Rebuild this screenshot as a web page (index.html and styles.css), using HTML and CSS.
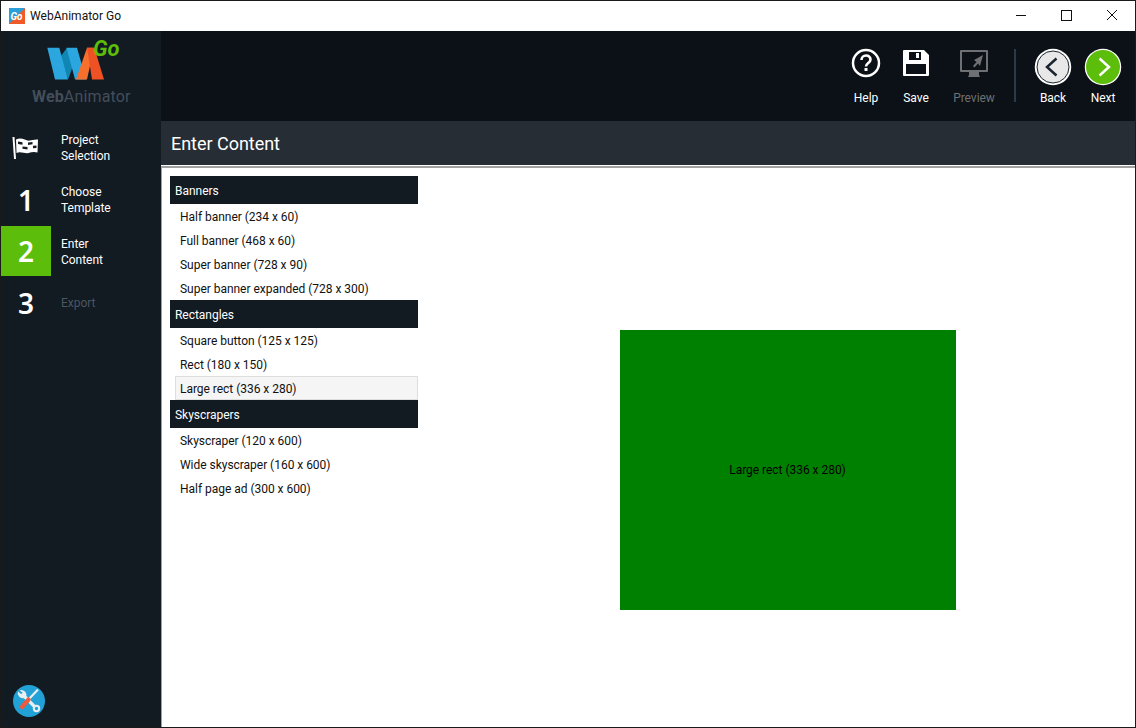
FILE: index.html
```html
<!DOCTYPE html>
<html lang="en">

<head>
    <meta charset="UTF-8">
    <title>WebAnimator Go</title>
    <link rel="stylesheet" href="styles.css">
</head>

<body>
    <div class="window">
        <div class="titlebar">
            <svg class="app-icon" width="16" height="16" viewBox="0 0 16 16">
                <rect width="16" height="16" fill="#2a9fd8"/>
                <polygon points="16,0 16,16 0,16" fill="#f05a28"/>
                <text x="1.5" y="12" class="app-icon-text">Go</text>
            </svg>
            <span class="title">WebAnimator Go</span>
            <div class="win-btns">
                <svg width="46" height="30" viewBox="0 0 46 30"><path d="M19 14.500h10" stroke="#111" fill="none"/></svg>
                <svg width="46" height="30" viewBox="0 0 46 30"><rect x="18.500" y="9.500" width="10" height="10" stroke="#111" fill="none"/></svg>
                <svg width="46" height="30" viewBox="0 0 46 30"><path d="M18 9l10 10M28 9l-10 10" stroke="#111" fill="none"/></svg>
            </div>
        </div>

        <div class="body">
            <aside class="sidebar">
                <div class="logo">
                    <svg width="90" height="50" viewBox="0 0 90 50">
                        <polygon points="21,20 27,11.700 33,30 28,43.500" fill="#0f86b4"/>
                        <polygon points="7.300,11.700 19.300,11.700 28,43.500 15,43.500" fill="#2ba6de"/>
                        <polygon points="26.500,11.700 37,11.700 46,43.500 35,43.500" fill="#2ba6de"/>
                        <polygon points="36,43.500 47,11.700 54,11.700 47,43.500" fill="#f5702c"/>
                        <polygon points="47,11.700 54.300,11.700 64,43.500 52,43.500" fill="#ee5224"/>
                        <text x="53" y="20" class="logo-go">Go</text>
                    </svg>
                    <div class="logo-name"><b>Web</b>Animator</div>
                </div>

                <div class="step">
                    <div class="step-icon">
                        <svg width="28" height="24" viewBox="0 0 28 24">
                            <path d="M1.500 1l1.500 22" stroke="#fff" stroke-width="2" fill="none"/>
                            <path d="M4 3.500c6-3 10 2 14 1s6-1 8-1l-.5 13c-3-1-6-.5-9 .5s-8-2-12 0z" fill="#fff"/>
                            <path d="M6 5.500l4.500.8v2.400L6 8zM16 6.500l4.500-.6v2.400L16 9zM10.500 10.500l5 .6v2.400l-5-.8zM21 9.800l3.500-.3v2.400l-3.500.4z" fill="#131a22"/>
                        </svg>
                    </div>
                    <div class="step-label">Project<br>Selection</div>
                </div>
                <div class="step">
                    <div class="step-icon">1</div>
                    <div class="step-label">Choose<br>Template</div>
                </div>
                <div class="step step-on">
                    <div class="step-icon">2</div>
                    <div class="step-label">Enter<br>Content</div>
                </div>
                <div class="step step-off">
                    <div class="step-icon">3</div>
                    <div class="step-label">Export</div>
                </div>

                <div class="tools">
                    <svg width="32" height="32" viewBox="0 0 32 32">
                        <circle cx="16" cy="16" r="16" fill="#22a1d6"/>
                        <path d="M9 9L23 23" stroke="#e8eef2" stroke-width="3.200" fill="none"/>
                        <path d="M6.500 5.500a5 5 0 0 1 6.500 6.500l-2 1a5 5 0 0 1-6-6.500l3 2.500 2-1z" fill="#e8eef2"/>
                        <circle cx="23.500" cy="23.500" r="2.700" stroke="#e8eef2" stroke-width="2" fill="#22a1d6"/>
                        <path d="M25 4.500L15 15" stroke="#e8eef2" stroke-width="2.200" fill="none"/>
                        <path d="M15.500 14.500L9 22" stroke="#ee5a3a" stroke-width="4.200" stroke-linecap="round" fill="none"/>
                    </svg>
                </div>
            </aside>

            <div class="main">
                <div class="toolbar">
                    <div class="tool">
                        <div class="tool-icon">
                            <svg width="30" height="30" viewBox="0 0 30 30">
                                <circle cx="15" cy="15" r="13" stroke="#fff" stroke-width="2.500" fill="none"/>
                                <path d="M10.500 12c0-6 9-6 9-.5 0 3.500-4.500 3.500-4.500 7" stroke="#fff" stroke-width="2.600" fill="none"/>
                                <rect x="13.500" y="20" width="3" height="3" fill="#fff"/>
                            </svg>
                        </div>
                        <span>Help</span>
                    </div>
                    <div class="tool">
                        <div class="tool-icon">
                            <svg width="28" height="30" viewBox="0 0 28 30">
                                <path fill-rule="evenodd" d="M2 2h20l5 5v20a1 1 0 0 1-1 1H2a1 1 0 0 1-1-1V3a1 1 0 0 1 1-1zM7 4v8h12V4zM14 5h3v5h-3zM4 16v10h20V16z" fill="#fff"/>
                            </svg>
                        </div>
                        <span>Save</span>
                    </div>
                    <div class="tool tool-off">
                        <div class="tool-icon">
                            <svg width="30" height="30" viewBox="0 0 30 30">
                                <path fill-rule="evenodd" d="M2 2h26a1 1 0 0 1 1 1v20a1 1 0 0 1-1 1H2a1 1 0 0 1-1-1V3a1 1 0 0 1 1-1zM3 4v18h24V4z" fill="#6e7073"/>
                                <path d="M10 24h10v3l1 2H9l1-2z" fill="#6e7073"/>
                                <path d="M24 7l-9 5 2.500 2-3.500 4 1.500 1.500 3.500-4 2 2.500z" fill="#6e7073"/>
                            </svg>
                        </div>
                        <span>Preview</span>
                    </div>
                    <div class="divider"></div>
                    <div class="tool">
                        <div class="tool-icon">
                            <svg width="38" height="38" viewBox="0 0 38 38">
                                <circle cx="19" cy="19" r="18.250" fill="#fff"/>
                                <circle cx="19" cy="19" r="16" fill="#e8e8e8" stroke="#1b2530" stroke-width="1"/>
                                <path d="M22.500 10.500L13 19l9.500 8.500" stroke="#1b2530" stroke-width="2.500" fill="none"/>
                            </svg>
                        </div>
                        <span>Back</span>
                    </div>
                    <div class="tool">
                        <div class="tool-icon">
                            <svg width="38" height="38" viewBox="0 0 38 38">
                                <circle cx="19" cy="19" r="18.250" fill="#fff"/>
                                <circle cx="19" cy="19" r="17" fill="#5cbd0a"/>
                                <path d="M15.500 10.500L25 19l-9.500 8.500" stroke="#fff" stroke-width="2.500" fill="none"/>
                            </svg>
                        </div>
                        <span>Next</span>
                    </div>
                </div>

                <h1 class="heading">Enter Content</h1>

                <div class="content">
                    <div class="list">
                        <div class="group">Banners</div>
                        <div class="item">Half banner (234 x 60)</div>
                        <div class="item">Full banner (468 x 60)</div>
                        <div class="item">Super banner (728 x 90)</div>
                        <div class="item">Super banner expanded (728 x 300)</div>
                        <div class="group">Rectangles</div>
                        <div class="item">Square button (125 x 125)</div>
                        <div class="item">Rect (180 x 150)</div>
                        <div class="item item-on">Large rect (336 x 280)</div>
                        <div class="group">Skyscrapers</div>
                        <div class="item">Skyscraper (120 x 600)</div>
                        <div class="item">Wide skyscraper (160 x 600)</div>
                        <div class="item">Half page ad (300 x 600)</div>
                    </div>
                    <div class="stage">
                        <div class="ad">Large rect (336 x 280)</div>
                    </div>
                </div>
            </div>
        </div>
    </div>
</body>

</html>
```

FILE: styles.css
```css
* {
    margin: 0;
    padding: 0;
    box-sizing: border-box;
}

html, body {
    height: 100%;
    overflow: hidden;
}

body {
    font-family: Roboto, "Noto Sans", sans-serif;
    font-size: 12px;
    letter-spacing: -0.03px;
    color: #111;
    background: #fff;
}

.window {
    height: 728px;
    border: 1px solid #1a1a1a;
    display: flex;
    flex-direction: column;
}

.titlebar {
    height: 30px;
    flex: none;
    background: #fff;
    display: flex;
    align-items: center;
    padding-left: 8px;
}

.app-icon {
    flex: none;
}

.app-icon-text {
    font-size: 10px;
    font-weight: 700;
    font-style: italic;
    fill: #fff;
}

.title {
    margin-left: 5px;
    letter-spacing: 0.03px;
}

.win-btns {
    margin-left: auto;
    display: flex;
}

.body {
    flex: 1;
    display: flex;
    min-height: 0;
}

.sidebar {
    width: 160px;
    flex: none;
    background: #121a22;
    display: flex;
    flex-direction: column;
}

.logo {
    height: 91px;
    padding: 5px 0 0 39px;
}

.logo svg {
    display: block;
}

.logo-go {
    font-size: 22px;
    font-weight: 700;
    font-style: italic;
    fill: #5cbd0a;
}

.logo-name {
    margin: 1px 0 0 -8px;
    font-size: 16px;
    letter-spacing: 0.15px;
    line-height: 20px;
    color: #434e5a;
}

.step {
    height: 52px;
    display: flex;
    align-items: center;
    color: #fff;
}

.step-on {
    height: 50px;
}

.step-on .step-label {
    margin-top: 2px;
}

.step-on .step-icon {
    background: #5cbd0a;
}

.step-off {
    height: 54px;
    color: #4b5661;
}

.step-off .step-icon {
    color: #fff;
}

.step-icon {
    width: 50px;
    height: 50px;
    flex: none;
    display: flex;
    align-items: center;
    justify-content: center;
    font-family: "Noto Sans", sans-serif;
    font-size: 28px;
    font-weight: 600;
}

.step-label {
    margin-left: 10px;
    line-height: 16px;
}

.tools {
    margin-top: auto;
    padding: 0 0 10px 12px;
}

.tools svg {
    display: block;
}

.main {
    flex: 1;
    min-width: 0;
    display: flex;
    flex-direction: column;
}

.toolbar {
    height: 90px;
    flex: none;
    background: #0b1116;
    display: flex;
    justify-content: flex-end;
    padding: 17px 7px 0 0;
}

.tool {
    width: 50px;
    height: 60px;
    display: flex;
    flex-direction: column;
    align-items: center;
    color: #fff;
}

.tool-icon {
    height: 38px;
}

.tool-icon svg {
    display: block;
}

.tool span {
    margin-top: 4px;
    line-height: 16px;
}

.tool-off {
    width: 66px;
    color: #6e7073;
}

.divider {
    width: 2px;
    height: 53px;
    margin: 1px 12px 0 7px;
    background: #2c3947;
}

.heading {
    height: 44px;
    flex: none;
    background: #262d35;
    color: #fff;
    font-size: 18px;
    font-weight: 400;
    line-height: 46px;
    padding-left: 10px;
}

.content {
    flex: 1;
    min-height: 0;
    display: flex;
    margin-top: 1px;
    background: #fff;
    border-top: 2px solid #a0a0a0;
    border-left: 1px solid #a0a0a0;
}

.list {
    width: 248px;
    flex: none;
    margin: 8px 0 0 8px;
}

.group {
    height: 28px;
    line-height: 30px;
    background: #121a22;
    color: #fff;
    padding-left: 5px;
}

.item {
    height: 24px;
    line-height: 26px;
    margin-left: 5px;
    padding-left: 5px;
    color: #111;
}

.item-on {
    background: #f5f5f5;
    border: 1px solid #dedede;
    line-height: 24px;
    padding-left: 4px;
}

.stage {
    flex: 1;
    display: flex;
    align-items: center;
    justify-content: center;
    padding: 44px 0 0 22px;
}

.ad {
    width: 336px;
    height: 280px;
    background: #008000;
    color: #000;
    display: flex;
    align-items: center;
    justify-content: center;
}
```
